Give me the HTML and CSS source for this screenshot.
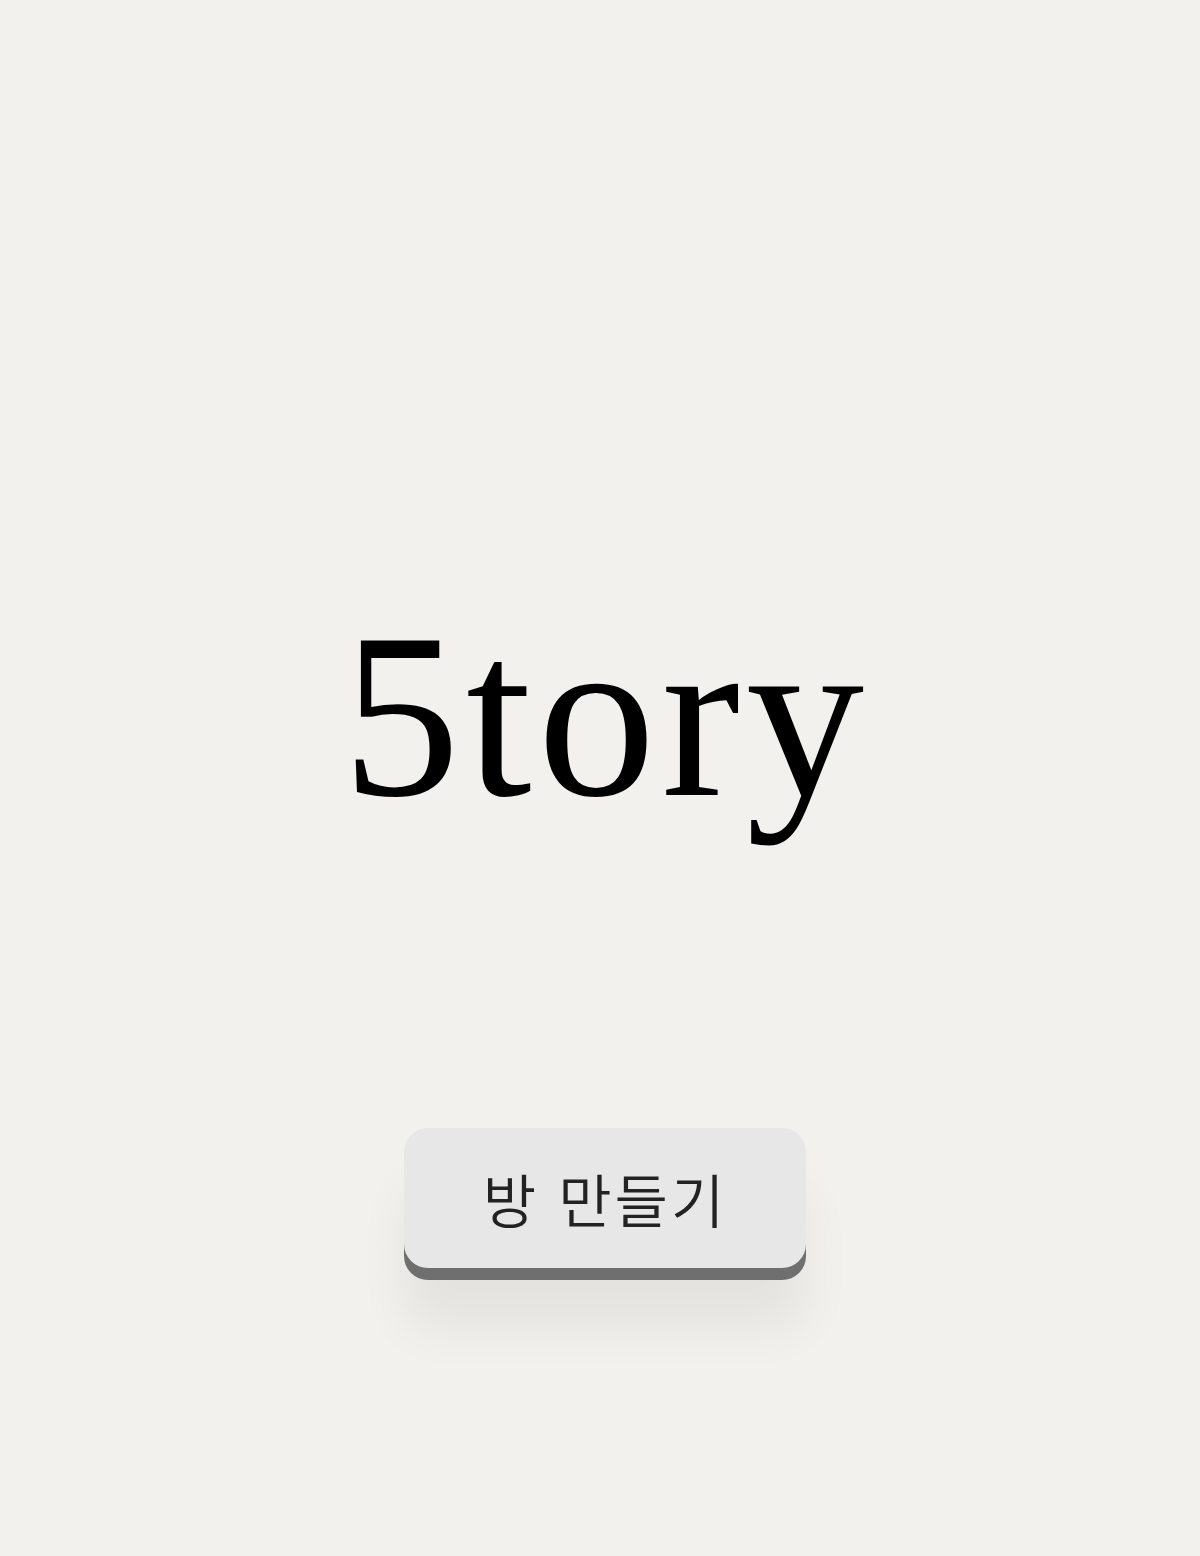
FILE: index.html
```html
<!DOCTYPE html>
<html lang="ko">
<head>
    <meta charset="UTF-8">
    <meta name="viewport" content="width=device-width, initial-scale=1.0">
    <title>5tory</title>
    <link rel="stylesheet" href="styles.css">
</head>
<body>
    <div class="container">
        <h1 class="logo">5tory</h1>
        <button class="create-btn">방 만들기</button>
    </div>
</body>
</html>
```

FILE: styles.css
```css
html, body {
    margin: 0;
    padding: 0;
}
body {
    background-color: #f2f1ed;
    font-family: "Noto Sans CJK KR", "Noto Sans", sans-serif;
    min-height: 1556px;
}
.container {
    display: flex;
    flex-direction: column;
    align-items: center;
    padding-top: 598px;
}
.logo {
    margin: 0 0 0 12px;
    font-family: "Liberation Serif", serif;
    font-weight: normal;
    font-size: 236px;
    line-height: 1;
    letter-spacing: 6px;
    color: #000;
}
.create-btn {
    margin: 294px 0 0 10px;
    width: 402px;
    height: 140px;
    border: none;
    border-radius: 24px;
    background-color: #e7e7e7;
    color: #222;
    font-family: "Noto Sans CJK KR", sans-serif;
    font-weight: 350;
    font-size: 58px;
    letter-spacing: 3px;
    padding: 0;
    cursor: pointer;
    box-shadow: 0 12px 0 #6f6f6f, 0 60px 50px rgba(0, 0, 0, 0.06);
}
```
